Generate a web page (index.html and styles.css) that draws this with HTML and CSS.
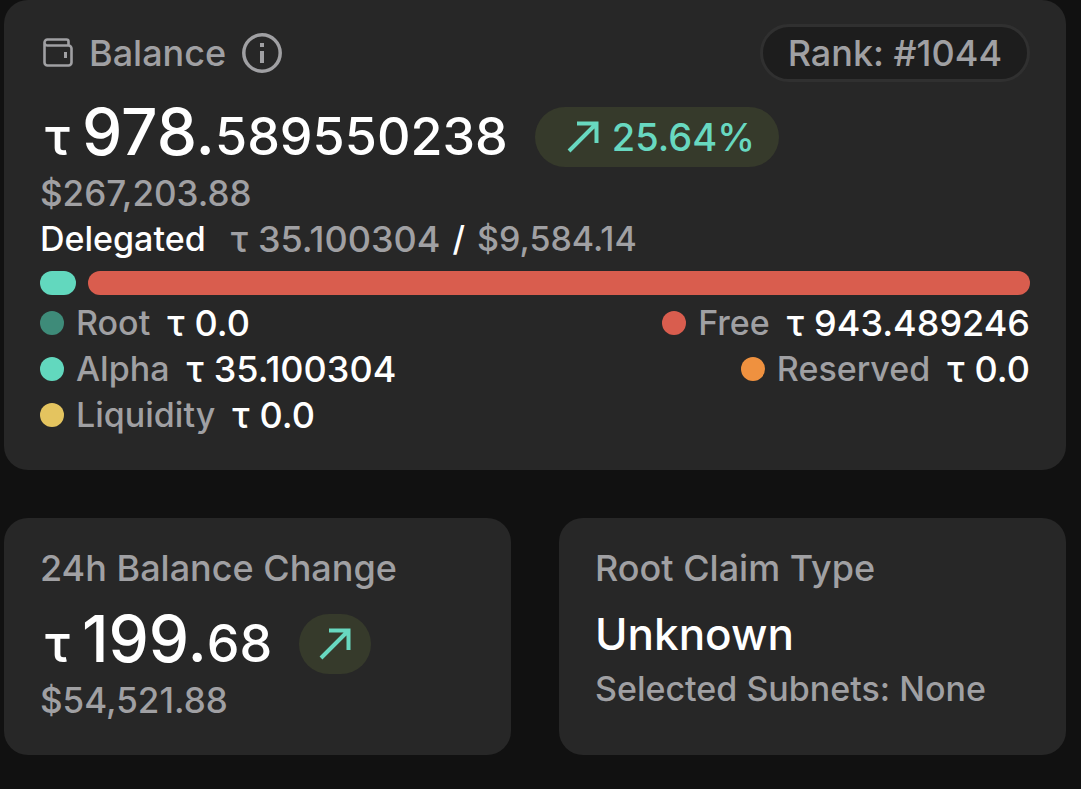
FILE: index.html
```
<!DOCTYPE html>
<html lang="en">
	<head>
		<meta charset="utf-8">
		<meta name="viewport" content="width=device-width, initial-scale=1">
		<title>Balance</title>
		<link rel="stylesheet" href="styles.css">
	</head>
	<body>
		<main class="page">
			<section class="card">
				<div class="head">
					<svg class="wallet" viewBox="0 0 30 30" fill="none" stroke="currentColor" stroke-width="2.6">
						<path d="M1.500 4.500V24.500a3 3 0 0 0 3 3H25.500a3 3 0 0 0 3-3V10.500a3 3 0 0 0-3-3H4.500a3 3 0 0 1 0-6H23.500a2 2 0 0 1 2 2V7.500"/>
						<path d="M22.500 14V20" stroke-width="3"/>
					</svg>
					<h1 class="title">Balance</h1>
					<button class="info" type="button" aria-label="About balance">
						<svg viewBox="0 0 40 40" fill="none" stroke="currentColor">
							<circle cx="20" cy="20" r="18.200" stroke-width="3.500"/>
							<path d="M20 10V14M20 18V30" stroke-width="4"/>
						</svg>
					</button>
					<span class="rank">Rank: #1044</span>
				</div>
				<div class="amount">
					<p class="value"><span class="tau">τ</span><span class="big">978.</span>589550238</p>
					<span class="badge">
						<svg class="arrow" viewBox="0 0 32 32" fill="none" stroke="currentColor" stroke-width="4">
							<path d="M2 30L29 3M10 2.500H29.500V22"/>
						</svg>
						25.64%
					</span>
				</div>
				<p class="line usd">$267,203.88</p>
				<p class="line delegated"><span class="white">Delegated</span><span class="num"><span class="tau">τ</span>35.100304</span><span class="white">/</span><span>$9,584.14</span></p>
				<div class="bar">
					<span class="part alpha"></span>
					<span class="part free"></span>
				</div>
				<div class="legend">
					<ul>
						<li><i class="dot root"></i>Root<span class="num"><span class="tau">τ</span>0.0</span></li>
						<li><i class="dot alpha"></i>Alpha<span class="num"><span class="tau">τ</span>35.100304</span></li>
						<li><i class="dot liquidity"></i>Liquidity<span class="num"><span class="tau">τ</span>0.0</span></li>
					</ul>
					<ul class="right">
						<li><i class="dot free"></i>Free<span class="num"><span class="tau">τ</span>943.489246</span></li>
						<li><i class="dot reserved"></i>Reserved<span class="num"><span class="tau">τ</span>0.0</span></li>
					</ul>
				</div>
			</section>
			<div class="row">
				<section class="card small">
					<h2 class="title">24h Balance Change</h2>
					<div class="amount">
						<p class="value"><span class="tau">τ</span><span class="big">199.</span>68</p>
						<span class="badge round">
							<svg class="arrow" viewBox="0 0 32 32" fill="none" stroke="currentColor" stroke-width="4">
								<path d="M2 30L29 3M10 2.500H29.500V22"/>
							</svg>
						</span>
					</div>
					<p class="line usd">$54,521.88</p>
				</section>
				<section class="card small">
					<h2 class="title">Root Claim Type</h2>
					<p class="type">Unknown</p>
					<p class="line">Selected Subnets: None</p>
				</section>
			</div>
		</main>
	</body>
</html>
```
FILE: styles.css
```
*{
	margin: 0;
	padding: 0;
	box-sizing: border-box;
}
body{
	background: #111;
	color: #a0a0a3;
	font-family: Inter, "Liberation Sans", sans-serif;
	font-size: 34px;
	font-weight: 500;
	line-height: 46px;
}
.page{
	padding: 0 15px 34px 4px;
}
.card{
	background: #272727;
	border-radius: 24px;
	padding: 24px 36px 32px;
}
.head{
	display: flex;
	align-items: center;
}
.title{
	font-size: 36px;
	font-weight: 500;
}
.wallet{
	width: 30px;
	height: 30px;
	margin: 0 16px 0 3px;
}
.info{
	width: 40px;
	height: 40px;
	margin-left: 16px;
	border: 0;
	background: none;
	color: inherit;
	cursor: pointer;
}
.info svg{
	display: block;
}
.rank{
	margin-left: auto;
	padding: 3px 25px;
	border: 3px solid #303030;
	border-radius: 30px;
	background: #1d1d1d;
	font-size: 36px;
}
.amount{
	display: flex;
	align-items: center;
	gap: 27px;
	margin-top: 25px;
}
.value{
	color: #fff;
	font-size: 52px;
	line-height: 60px;
}
.big{
	font-size: 64px;
	line-height: 48px;
}
.tau{
	margin: 0 10px 0 5px;
}
.value .tau{
	margin-right: 12px;
}
.badge{
	display: flex;
	align-items: center;
	gap: 13px;
	height: 60px;
	padding: 0 24px 0 32px;
	border-radius: 30px;
	background: #363a2b;
	color: #68d8c0;
	font-size: 38px;
}
.badge.round{
	padding: 0 20px;
}
.arrow{
	width: 32px;
	height: 32px;
}
.usd{
	margin-top: 3px;
	font-size: 35px;
}
.delegated{
	display: flex;
	gap: 12px;
}
.delegated .num{
	margin-left: 8px;
}
.bar{
	display: flex;
	gap: 12px;
	margin: 9px 0 5px;
}
.part{
	height: 24px;
	border-radius: 12px;
}
.part.alpha{
	width: 36px;
}
.part.free{
	flex: 1;
}
.legend{
	display: flex;
	justify-content: space-between;
}
.legend li{
	display: flex;
	align-items: center;
	gap: 12px;
	list-style: none;
}
.legend .right li{
	justify-content: flex-end;
}
.num{
	font-size: 36px;
}
.white,
.legend .num{
	color: #fff;
}
.dot{
	width: 24px;
	height: 24px;
	border-radius: 50%;
}
.root{
	background: #3e8b79;
}
.alpha{
	background: #62d8be;
}
.liquidity{
	background: #e4c45f;
}
.free{
	background: #d95d4e;
}
.reserved{
	background: #ef913f;
}
.row{
	display: grid;
	grid-template-columns: 1fr 1fr;
	gap: 48px;
	margin-top: 48px;
}
.small{
	padding-top: 27px;
}
.small .amount{
	margin-top: 23px;
}
.type{
	margin: 20px 0 9px;
	color: #fff;
	font-size: 44px;
}
```
